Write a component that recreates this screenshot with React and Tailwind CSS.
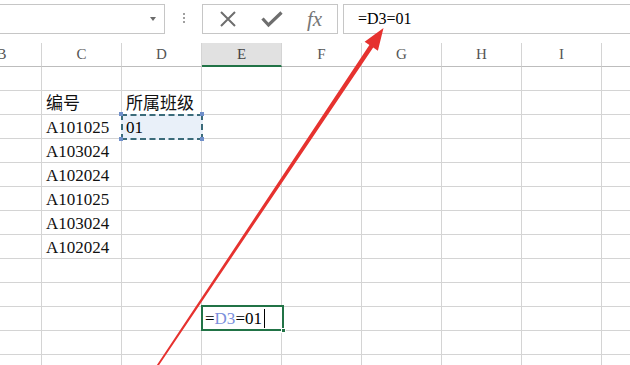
import React from 'react';

const COLS = ['B', 'C', 'D', 'E', 'F', 'G', 'H', 'I', 'J'];

const ROWS = [
  {},
  { C: '编号', D: '所属班级' },
  { C: 'A101025', D: '01' },
  { C: 'A103024' },
  { C: 'A102024' },
  { C: 'A101025' },
  { C: 'A103024' },
  { C: 'A102024' },
  {},
  {},
  { E: 'formula' },
  {},
  {},
];

const serif = "font-['Liberation_Serif','Noto_Sans_CJK_SC',serif]";

function Toolbar() {
  return (
    <div className="flex items-start h-[43px] bg-white">
      {/* name box */}
      <div className="mt-[4px] w-[165px] h-[30px] border border-l-0 border-[#c6c6c6] flex items-center justify-end pr-[8px]">
        <div className="w-0 h-0 border-l-[3px] border-r-[3px] border-t-[4px] border-l-transparent border-r-transparent border-t-[#6b6b6b]" />
      </div>
      <div className="mt-[13px] w-[37px] flex flex-col items-center gap-[2px]">
        <span className="w-[2px] h-[2px] bg-[#a0a0a0]" />
        <span className="w-[2px] h-[2px] bg-[#a0a0a0]" />
        <span className="w-[2px] h-[2px] bg-[#a0a0a0]" />
      </div>
      {/* cancel / enter / fx */}
      <div className="mt-[4px] w-[136px] h-[30px] border border-[#c6c6c6] flex items-center">
        <svg width="18" height="18" viewBox="0 0 18 18" className="ml-[16px]">
          <path d="M2 2 L16 16 M16 2 L2 16" stroke="#6e6e6e" strokeWidth="2" fill="none" />
        </svg>
        <svg width="22" height="18" viewBox="0 0 22 18" className="ml-[24px]">
          <path d="M1.5 8.5 L7.5 15 L20.5 2.5" stroke="#6e6e6e" strokeWidth="3.2" fill="none" strokeLinejoin="miter" />
        </svg>
        <span className={`ml-[24px] text-[21px] italic text-[#767676] leading-none ${serif}`}>
          fx
        </span>
      </div>
      {/* formula bar */}
      <div className="mt-[4px] ml-[5px] flex-1 h-[30px] border border-r-0 border-[#c6c6c6] flex items-center pl-[14px]">
        <span className={`text-[16px] text-black leading-none ${serif}`}>=D3=01</span>
      </div>
    </div>
  );
}

function Header() {
  return (
    <div className={`flex h-[24px] ml-[-38px] ${serif}`}>
      {COLS.map((c) => (
        <div
          key={c}
          className={
            c === 'E'
              ? 'w-[80px] shrink-0 h-full flex items-center justify-center bg-[#e1e1e1] border-b-2 border-b-[#217346] border-r border-r-[#d4d4d4] text-[15px] text-[#444]'
              : 'w-[80px] shrink-0 h-full flex items-center justify-center border-b border-b-[#bdbdbd] border-r border-r-[#d4d4d4] text-[15px] text-[#555]'
          }
        >
          {c !== 'J' && c}
        </div>
      ))}
    </div>
  );
}

function Cell({ col, value }) {
  if (value === 'formula') {
    return (
      <div className="relative w-[80px] shrink-0 h-full border-b border-r border-[#d4d4d4]">
        <div className="absolute left-[-1px] top-[-2px] w-[83px] h-[26px] border-2 border-[#217346] bg-white flex items-center pl-[2px]">
          <span className="text-[17px] leading-none text-black">
            =<span className="text-[#7b8fdc]">D3</span>=01
          </span>
          <span className="ml-[2px] w-[1px] h-[19px] bg-black" />
          <span className="absolute right-[-4px] bottom-[-4px] w-[5px] h-[5px] bg-[#217346] border border-white" />
        </div>
      </div>
    );
  }
  if (col === 'D' && value === '01') {
    return (
      <div className="relative w-[80px] shrink-0 h-full border-b border-r border-[#d4d4d4]">
        <div className="absolute left-[-1px] top-[-1px] w-[82px] h-[26px] bg-[#e9f0f9] border-2 border-dashed border-[#3b6b7a] flex items-center pl-[3px] pt-[1px]">
          <span className="text-[17px] leading-none text-black">01</span>
        </div>
        <span className="absolute left-[-3px] top-[-3px] w-[4px] h-[4px] bg-[#6f8fca]" />
        <span className="absolute right-[-3px] top-[-3px] w-[4px] h-[4px] bg-[#6f8fca]" />
        <span className="absolute left-[-3px] bottom-[-3px] w-[4px] h-[4px] bg-[#6f8fca]" />
        <span className="absolute right-[-3px] bottom-[-3px] w-[4px] h-[4px] bg-[#6f8fca]" />
      </div>
    );
  }
  return (
    <div className="w-[80px] shrink-0 h-full border-b border-r border-[#d4d4d4] flex items-center pl-[4px] pt-[2px] whitespace-nowrap">
      {value && <span className="text-[17px] leading-none text-[#111]">{value}</span>}
    </div>
  );
}

function Arrow() {
  return (
    <svg
      className="absolute inset-0 pointer-events-none"
      width="630"
      height="365"
      viewBox="0 0 630 365"
    >
      <polygon
        points="153.9,369.5 369.4,45.0 364.6,41.8 383.5,28 377.9,50.7 373.2,47.6 155.4,370.5"
        fill="#e6322f"
      />
    </svg>
  );
}

export default function App() {
  return (
    <div className="relative w-[630px] h-[365px] overflow-hidden bg-white">
      <Toolbar />
      <Header />
      <div className={`ml-[-38px] ${serif}`}>
        {ROWS.map((row, i) => (
          <div key={i} className="flex h-[24px]">
            {COLS.map((c) => (
              <Cell key={c} col={c} value={row[c]} />
            ))}
          </div>
        ))}
      </div>
      <Arrow />
    </div>
  );
}
